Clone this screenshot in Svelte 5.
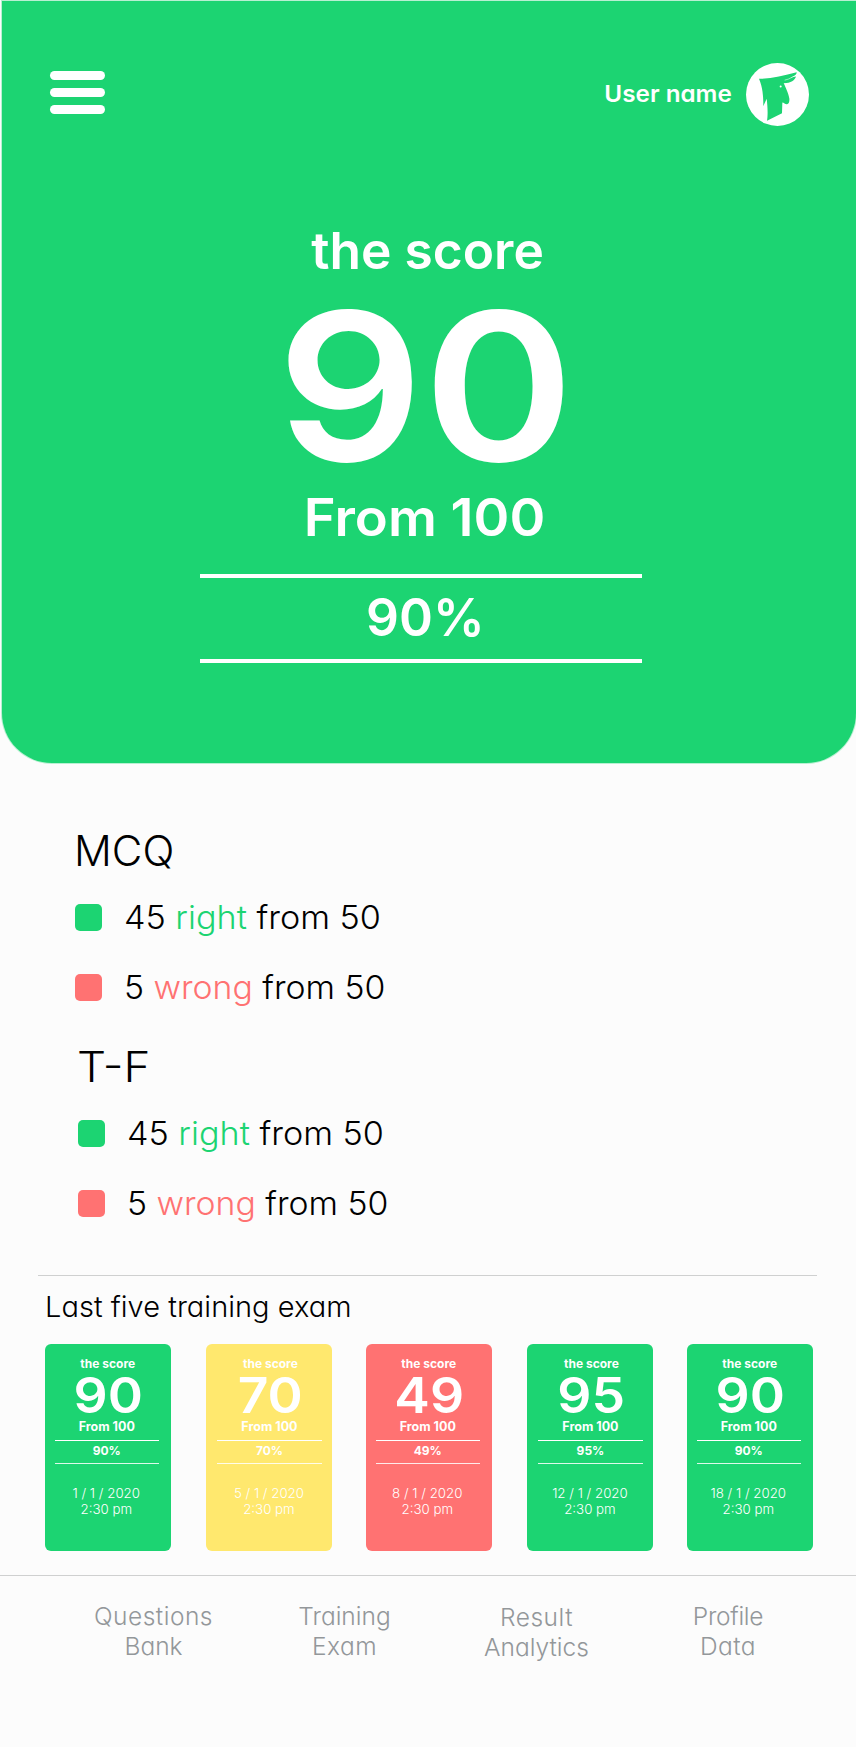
<script>
  const sections = [
    { title: 'MCQ', kind: 'mcq' },
    { title: 'T-F', kind: 'tf' }
  ];
  const exams = [
    { score: 90, tone: 'green', date: '1 / 1 / 2020' },
    { score: 70, tone: 'yellow', date: '5 / 1 / 2020' },
    { score: 49, tone: 'red', date: '8 / 1 / 2020' },
    { score: 95, tone: 'green', date: '12 / 1 / 2020' },
    { score: 90, tone: 'green', date: '18 / 1 / 2020' }
  ];
</script>

<div class="page">
  <header class="hero">
    <div class="topbar">
      <button class="menu" aria-label="Menu"><i></i><i></i><i></i></button>
      <div class="user">
        <span class="username">User name</span>
        <svg class="avatar" viewBox="33 23.5 189 189">
          <circle cx="127.5" cy="118" r="94.5" fill="#fff" />
          <path fill="#1cd472" d="M72 71C108 71 145 61 185 51C185 57 180 62 166 67C173 67 179 65 183 64C180 75 168 84 146 84C152 96 161 116 163 130C164 140 161 148 155 147C150 147 147 144 144 142C138 143 135 145 131 143L124 136L131 139L137 137L142 143L141 174L96 197C99 181 98 154 95 131C92 139 89 144 85 153C85 123 83 96 72 71Z" />
          <path fill="none" stroke="#fff" stroke-width="1.6" d="M149 75Q160 73 172 66" />
          <circle cx="137" cy="94" r="3" fill="#fff" />
        </svg>
      </div>
    </div>
    <div class="result">
      <p class="label">the score</p>
      <p class="big">90</p>
      <p class="from">From 100</p>
      <p class="percent"><span>90%</span></p>
    </div>
  </header>

  <main>
    {#each sections as s}
      <section class={s.kind}>
        <h2>{s.title}</h2>
        <p class="row"><i class="dot green"></i><span>45 <em class="ok">right</em> from 50</span></p>
        <p class="row second"><i class="dot red"></i><span>5 <em class="bad">wrong</em> from 50</span></p>
      </section>
    {/each}
  </main>

  <section class="history">
    <h3>Last five training exam</h3>
    <div class="cards">
      {#each exams as e, i}
        <article class="card {e.tone}" class:shift={i % 2 === 1}>
          <p class="c-label">the score</p>
          <p class="c-big">{e.score}</p>
          <p class="c-from">From 100</p>
          <p class="c-pct">{e.score}%</p>
          <p class="c-date">{e.date}</p>
          <p class="c-time">2:30 pm</p>
        </article>
      {/each}
    </div>
  </section>

  <nav>
    <a class="n1"><span class="wide">Questions</span><span>Bank</span></a>
    <a class="n2"><span>Training</span><span class="wide">Exam</span></a>
    <a class="n3"><span class="wide">Result</span><span>Analytics</span></a>
    <a class="n4"><span class="tight">Profile</span><span class="wide">Data</span></a>
  </nav>
</div>

<style>
  :global(body) { background: #fcfcfc; }
  .page { width: 856px; height: 1747px; overflow: hidden; background: #fcfcfc; color: #000; font-family: Inter, "Open Sans", sans-serif; font-feature-settings: "cv11"; font-weight: 300; box-sizing: border-box; padding-top: 1px; }
  p, h2, h3 { margin: 0; font-weight: inherit; }
  em { font-style: normal; }
  .hero { margin-left: 2px; height: 762px; background: #1cd472; box-shadow: 0 0 0 1px rgba(28, 212, 114, .3); border-radius: 0 0 50px 50px; color: #fff; font-weight: 600; box-sizing: border-box; padding-top: 62px; }
  .topbar { display: flex; justify-content: space-between; align-items: flex-start; padding: 0 47px 0 48px; height: 63px; }
  .menu { border: 0; background: none; padding: 8px 0 0; width: 55px; display: flex; flex-direction: column; gap: 8px; }
  .menu i { height: 9px; width: 55px; border-radius: 5px; background: #fff; }
  .user { display: flex; align-items: center; gap: 14px; }
  .username { font-size: 23px; line-height: 63px; transform: scaleX(1.055); transform-origin: right; }
  .avatar { width: 63px; height: 63px; display: block; }
  .result { width: 442px; margin: 95px 0 0 198px; text-align: center; }
  .label { font-size: 51px; line-height: 60px; transform: translateX(6.5px) scaleX(1.01); }
  .big { font-size: 206px; line-height: 210px; transform: translateX(4.5px) scaleX(1.11); }
  .from { font-size: 52px; line-height: 53px; transform: translateX(3.5px) scaleX(1.045); }
  .percent { font-size: 52px; line-height: 81px; margin-top: 30px; border-top: 4px solid #fff; border-bottom: 4px solid #fff; }
  .percent span { display: inline-block; transform: translate(4.5px, -1px) scaleX(.99); }
  main { padding-left: 75px; height: 512px; box-sizing: border-box; padding-top: 63px; }
  h2 { font-size: 42px; line-height: 50px; transform: translateX(-1px); }
  .row { display: flex; align-items: center; gap: 22px; font-size: 33px; line-height: 27px; margin-top: 28px; }
  .row span { transform: translateY(-.5px) scaleX(1.035); transform-origin: left; }
  .second { margin-top: 43px; }
  .second span { transform: translateY(-.5px) scaleX(1.023); }
  .dot { width: 27px; height: 27px; border-radius: 5px; }
  .tf { padding: 41px 0 0 3px; }
  .tf h2 { transform: translate(-1px, -.5px) scaleX(1.09); transform-origin: left; }
  .green { background: #1cd472; }
  .red { background: #ff7272; }
  .yellow { background: #ffe86e; }
  .ok { color: #1cd472; }
  .bad { color: #ff7272; }
  .history { margin: 0 39px 0 38px; border-top: 1px solid #cfd0d0; height: 300px; box-sizing: border-box; }
  h3 { font-size: 29px; line-height: 60px; padding: 1px 0 0 7px; letter-spacing: .03px; }
  .cards { display: flex; gap: 34.5px; padding: 7px 0 0 7px; }
  .card { width: 126px; flex: none; height: 207px; border-radius: 6px; color: #fff; font-weight: 650; text-align: center; box-sizing: border-box; padding: 12px 12px 0 9.5px; }
  .shift { padding-left: 11.7px; padding-right: 9.8px; }
  .c-label { font-size: 12px; line-height: 16px; transform: translateX(1px); }
  .c-big { font-size: 49px; font-weight: 600; line-height: 48px; transform: translateX(1px) scaleX(1.09); }
  .c-from { font-size: 12.5px; line-height: 14px; }
  .c-pct { font-size: 12px; line-height: 20px; padding-bottom: 2px; margin-top: 6px; border-top: 1px solid #fff; border-bottom: 1px solid rgba(255, 255, 255, .85); }
  .c-date, .c-time { font-size: 13.3px; line-height: 15.5px; transform: translateX(-.5px); font-weight: 300; }
  .c-date { margin-top: 22px; }
  nav { border-top: 1px solid #cfd0d0; height: 171px; display: grid; grid-template-columns: 191px 191px 193px 190px; padding-left: 58px; padding-top: 25px; box-sizing: border-box; color: #93979a; font-size: 24.5px; line-height: 30px; text-align: center; }
  nav a { display: flex; flex-direction: column; }
  .wide { letter-spacing: .5px; }
  .tight { letter-spacing: -.3px; }
  .n3 { padding-top: 1px; }
</style>
